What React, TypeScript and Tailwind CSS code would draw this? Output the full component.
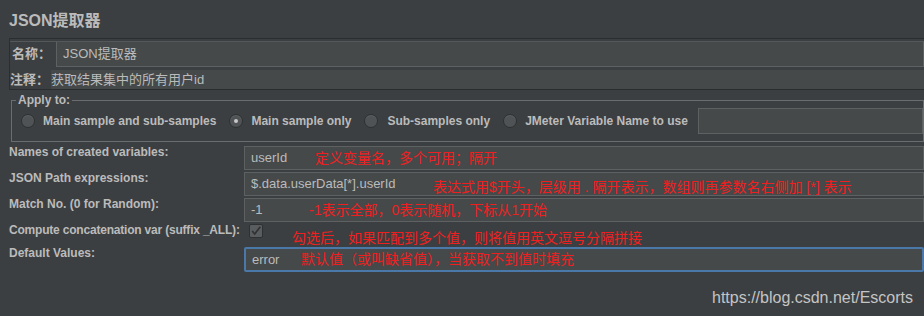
import React from "react";

const SANS = "font-['Liberation_Sans','Noto_Sans_CJK_SC',sans-serif]";

function Radio({ checked }: { checked?: boolean }) {
  return (
    <span className="flex h-[14px] w-[14px] items-center justify-center rounded-full border border-[#2e3031] bg-[#4f5355] shadow-[inset_0_1px_0_#5d6163]">
      {checked && <span className="h-[4px] w-[4px] rounded-full bg-[#c8c8c8]" />}
    </span>
  );
}

function Field({
  value,
  note,
  noteLeft,
  noteTop = 0,
  focused,
}: {
  value: string;
  note?: string;
  noteLeft?: number;
  noteTop?: number;
  focused?: boolean;
}) {
  return (
    <div
      className={`relative flex h-[24px] items-center bg-[#45494a] pl-[6px] text-[13px] leading-[18px] text-[#bbbbbb] ${
        focused ? "h-[25px] rounded-[2px] border-2 border-[#4a78a8]" : "border border-[#5e6162]"
      }`}
    >
      <span>{value}</span>
      {note && (
        <span
          className="absolute whitespace-nowrap text-[14px] leading-[20px] text-[#f01f1f]"
          style={{ left: noteLeft, top: 1 + noteTop }}
        >
          {note}
        </span>
      )}
    </div>
  );
}

export default function App() {
  return (
    <div className={`h-[316px] w-[924px] overflow-hidden bg-[#3c3f41] ${SANS} text-[#bbbbbb]`}>
      {/* title */}
      <div className="flex h-[38px] items-center pl-[9px] pt-[3px] text-[16px] font-bold">JSON提取器</div>

      {/* name / comment panel */}
      <div className="ml-[9px] border-t border-l border-b border-[#2b2d2e]">
        <div className="border-t border-[#555859] mt-[2px] flex h-[25px] items-center">
          <span className="w-[46px] pl-[2px] text-[13px] font-bold">名称：</span>
          <div className="flex h-[25px] flex-1 items-center border-x border-b border-[#5e6162] bg-[#45494a] pl-[6px] text-[13px]">
            JSON提取器
          </div>
        </div>
        <div className="mt-[4px] flex h-[19px] items-center">
          <span className="w-[41px] text-[13px] font-bold">注释：</span>
          <div className="flex h-[19px] flex-1 items-center bg-[#45494a] text-[13px]">获取结果集中的所有用户id</div>
        </div>
      </div>

      {/* Apply to */}
      <div className="relative ml-[11px] mt-[10px] h-[42px] border border-[#6a6d6f]">
        <span className="absolute left-[4px] top-[-9px] bg-[#3c3f41] px-[2px] text-[12px] font-bold leading-[16px]">
          Apply to:
        </span>
        <div className="flex h-full items-center whitespace-nowrap pl-[9px] text-[12px] font-bold">
          <Radio />
          <span className="ml-[8px]">Main sample and sub-samples</span>
          <span className="ml-[13px]">
            <Radio checked />
          </span>
          <span className="ml-[8px]">Main sample only</span>
          <span className="ml-[13px]">
            <Radio />
          </span>
          <span className="ml-[9px]">Sub-samples only</span>
          <span className="ml-[13px]">
            <Radio />
          </span>
          <span className="ml-[8px]">JMeter Variable Name to use</span>
          <div className="ml-[10px] h-[26px] flex-1 border border-[#5e6162] bg-[#45494a]" />
        </div>
      </div>

      {/* properties */}
      <div className="mt-[4px] grid grid-cols-[235px_1fr] gap-y-[2px] pl-[9px] text-[12px]">
        <span className="font-bold leading-[13px]">Names of created variables:</span>
        <Field value="userId" note="定义变量名，多个可用；隔开" noteLeft={70} />

        <span className="font-bold leading-[13px]">JSON Path expressions:</span>
        <Field
          value="$.data.userData[*].userId"
          note="表达式用$开头，层级用 . 隔开表示，数组则再参数名右侧加 [*] 表示"
          noteLeft={188}
          noteTop={3}
        />

        <span className="font-bold leading-[13px]">Match No. (0 for Random):</span>
        <Field value="-1" note="-1表示全部，0表示随机，下标从1开始" noteLeft={64} />

        <span className="whitespace-nowrap font-bold leading-[13px] tracking-[-0.2px]">
          Compute concatenation var (suffix _ALL):
        </span>
        <div className="relative flex h-[21px] items-start pl-[5px]">
          <span className="flex h-[14px] w-[14px] items-center justify-center rounded-[2px] border border-[#2e3031] bg-[#5a5d5f]">
            <svg viewBox="0 0 14 14" className="h-[14px] w-[14px]">
              <path d="M2.5 7 L5.5 10.5 L12 2" fill="none" stroke="#2f3133" strokeWidth="2" />
            </svg>
          </span>
          <span className="absolute left-[48px] top-[4px] whitespace-nowrap text-[14px] leading-[20px] text-[#f01f1f]">
            勾选后，如果匹配到多个值，则将值用英文逗号分隔拼接
          </span>
        </div>

        <span className="font-bold leading-[13px]">Default Values:</span>
        <Field value="error" note="默认值（或叫缺省值），当获取不到值时填充" noteLeft={55} noteTop={-1} focused />
      </div>

      {/* watermark */}
      <div className="mt-[14px] pr-[11px] text-right text-[16px] text-[#c4c4c4]">https://blog.csdn.net/Escorts</div>
    </div>
  );
}
